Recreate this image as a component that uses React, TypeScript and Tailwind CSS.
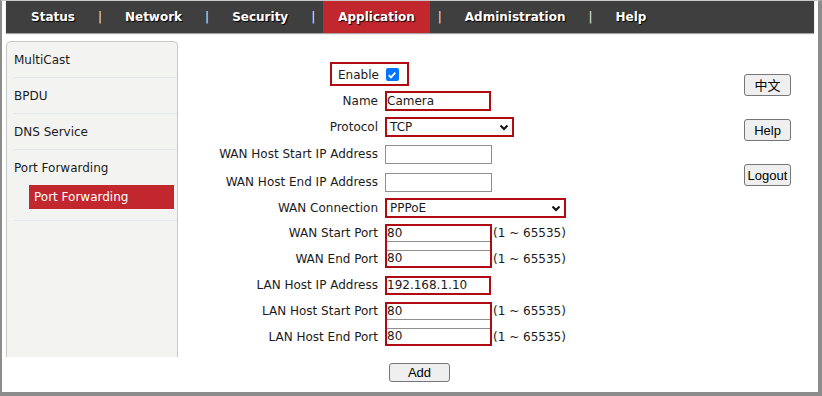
import React from 'react';

const RED = 'border-[#b00a12]';

const navItems = ['Status', 'Network', 'Security', 'Application', 'Administration', 'Help'];

function Chevron() {
  return (
    <svg width="10" height="7" viewBox="0 0 10 7" className="mr-[3px]">
      <path d="M1.5 1.5 L5 5 L8.5 1.5" fill="none" stroke="#111" strokeWidth="2" />
    </svg>
  );
}

function Label({ text }: { text: string }) {
  return <div className="text-right whitespace-nowrap">{text}</div>;
}

function Hint() {
  return <div className="pl-[1px] whitespace-nowrap">(1 ~ 65535)</div>;
}

function PortPair({ value }: { value: string }) {
  return (
    <div className="row-span-2 pl-[7px] flex items-center">
      <div className={`w-[107px] h-[44px] border-2 ${RED} flex flex-col justify-between`}>
        <div className="h-[16px] border-b border-[#8f8f8f] leading-[15px]">{value}</div>
        <div className="h-[16px] border-t border-[#8f8f8f] leading-[15px]">{value}</div>
      </div>
    </div>
  );
}

function SideButton({ children }: { children: React.ReactNode }) {
  return (
    <button className="w-[47px] h-[22px] bg-[#efefef] border border-[#767676] rounded-[3px] text-[13px] text-black font-['Liberation_Sans','Noto_Sans_CJK_SC',sans-serif] leading-none">
      {children}
    </button>
  );
}

export default function App() {
  return (
    <div className="w-[822px] h-[396px] bg-white border-l-2 border-r-4 border-b-4 border-[#8c8c8c] border-t border-t-[#c8c8c8] overflow-hidden font-['DejaVu_Sans',sans-serif] text-[12px] text-[#1b1b1b]">
      <div className="mx-[4px] h-[32px] bg-[#3f3f3f] flex items-stretch pl-[10px] shadow-[0_1px_1px_rgba(0,0,0,0.35)]">
        {navItems.map((item, i) => (
          <React.Fragment key={item}>
            {i > 0 && <div className="flex items-center mx-[8px] text-[#e8e8e8] text-[12px]">|</div>}
            <div
              className={`flex items-center px-[15px] font-bold text-white text-[12px] [text-shadow:1px_1px_1px_#000] ${
                item === 'Application' ? 'bg-[#c1272d]' : ''
              }`}
            >
              {item}
            </div>
          </React.Fragment>
        ))}
      </div>

      <div className="flex mx-[4px] mt-[8px]">
        <div className="w-[172px] h-[316px] bg-[#f3f4f2] border-x border-t border-[#c8c8c8] rounded-t-[5px] pl-[7px]">
          <div className="h-[36px] border-b border-[#e1e6ea] flex items-center">MultiCast</div>
          <div className="h-[36px] border-b border-[#e1e6ea] flex items-center">BPDU</div>
          <div className="h-[36px] border-b border-[#e1e6ea] flex items-center">DNS Service</div>
          <div className="border-b border-[#e1e6ea] pb-[11px]">
            <div className="h-[35px] flex items-center">Port Forwarding</div>
            <div className="ml-[15px] w-[145px] h-[24px] bg-[#c1272d] text-white flex items-center pl-[5px]">
              Port Forwarding
            </div>
          </div>
        </div>

        <div className="w-[566px]">
          <div className="grid grid-cols-[200px_114px_auto] grid-rows-[26px_26px_26px_28px_28px_24px_26px_26px_26px_26px_26px] items-center mt-[21px]">
            <div className="col-span-2 flex self-start">
              <div className={`ml-[152px] w-[79px] h-[24px] border-2 ${RED} flex items-center pl-[6px] pt-[1px]`}>
                <span>Enable</span>
                <span className="ml-[7px] w-[13px] h-[13px] rounded-[2px] bg-[#0075ff] flex items-center justify-center">
                  <svg width="10" height="10" viewBox="0 0 10 10">
                    <path d="M1.8 5.2 L4 7.4 L8.3 2.6" fill="none" stroke="#fff" strokeWidth="1.8" />
                  </svg>
                </span>
              </div>
            </div>
            <div />

            <Label text="Name" />
            <div className="pl-[7px]">
              <div className={`w-[106px] h-[20px] border-2 ${RED} leading-[16px]`}>Camera</div>
            </div>
            <div />

            <Label text="Protocol" />
            <div className="col-span-2 pl-[7px]">
              <div className={`w-[129px] h-[20px] border-2 ${RED} flex items-center justify-between pl-[3px]`}>
                <span>TCP</span>
                <Chevron />
              </div>
            </div>

            <Label text="WAN Host Start IP Address" />
            <div className="pl-[7px]">
              <div className="w-[107px] h-[19px] border border-[#8f8f8f] bg-white" />
            </div>
            <div />

            <Label text="WAN Host End IP Address" />
            <div className="pl-[7px]">
              <div className="w-[107px] h-[19px] border border-[#8f8f8f] bg-white" />
            </div>
            <div />

            <Label text="WAN Connection" />
            <div className="col-span-2 pl-[7px]">
              <div className={`w-[181px] h-[20px] border-2 ${RED} flex items-center justify-between pl-[3px]`}>
                <span>PPPoE</span>
                <Chevron />
              </div>
            </div>

            <Label text="WAN Start Port" />
            <PortPair value="80" />
            <Hint />
            <Label text="WAN End Port" />
            <Hint />

            <Label text="LAN Host IP Address" />
            <div className="pl-[7px]">
              <div className={`w-[106px] h-[19px] border-2 ${RED} leading-[15px]`}>192.168.1.10</div>
            </div>
            <div />

            <Label text="LAN Host Start Port" />
            <PortPair value="80" />
            <Hint />
            <Label text="LAN Host End Port" />
            <Hint />
          </div>

          <div className="mt-[13px] ml-[211px]">
            <button className="w-[61px] h-[19px] bg-[#efefef] border border-[#767676] rounded-[3px] text-[13px] text-black font-['Liberation_Sans',sans-serif] leading-none">
              Add
            </button>
          </div>
        </div>

        <div className="w-[70px] pt-[33px] flex flex-col gap-[23px]">
          <SideButton>中文</SideButton>
          <SideButton>Help</SideButton>
          <SideButton>Logout</SideButton>
        </div>
      </div>
    </div>
  );
}
